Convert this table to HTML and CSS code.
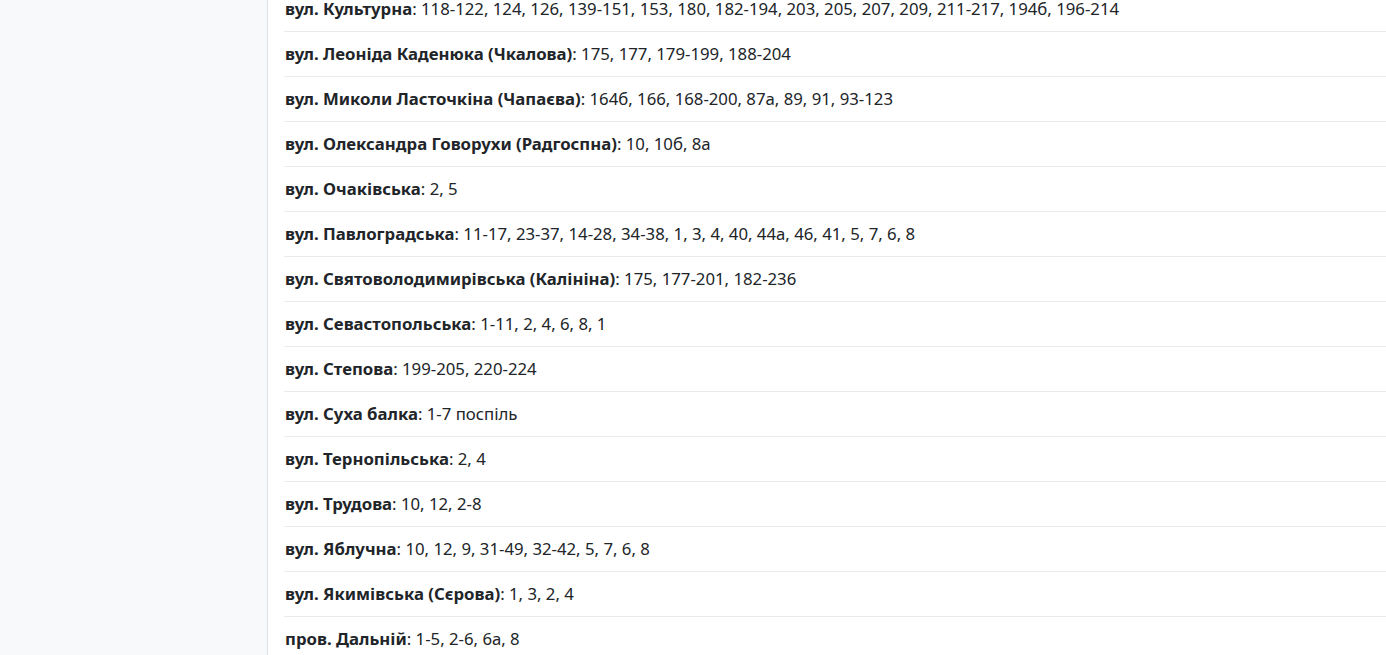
FILE: index.html
```html
<!DOCTYPE html>
<html lang="uk">
<head>
<meta charset="utf-8">
<title>Адреси</title>
<link rel="stylesheet" href="styles.css">
</head>
<body>
<div class="layout">
  <aside class="sidebar"></aside>
  <main class="content">
    <ul class="streets">
      <li class="street"><b>вул. Культурна</b>: 118-122, 124, 126, 139-151, 153, 180, 182-194, 203, 205, 207, 209, 211-217, 194б, 196-214</li>
      <li class="street"><b>вул. Леоніда Каденюка (Чкалова)</b>: 175, 177, 179-199, 188-204</li>
      <li class="street"><b>вул. Миколи Ласточкіна (Чапаєва)</b>: 164б, 166, 168-200, 87а, 89, 91, 93-123</li>
      <li class="street"><b>вул. Олександра Говорухи (Радгоспна)</b>: 10, 10б, 8а</li>
      <li class="street"><b>вул. Очаківська</b>: 2, 5</li>
      <li class="street"><b>вул. Павлоградська</b>: 11-17, 23-37, 14-28, 34-38, 1, 3, 4, 40, 44а, 46, 41, 5, 7, 6, 8</li>
      <li class="street"><b>вул. Святоволодимирівська (Калініна)</b>: 175, 177-201, 182-236</li>
      <li class="street"><b>вул. Севастопольська</b>: 1-11, 2, 4, 6, 8, 1</li>
      <li class="street"><b>вул. Степова</b>: 199-205, 220-224</li>
      <li class="street"><b>вул. Суха балка</b>: 1-7 поспіль</li>
      <li class="street"><b>вул. Тернопільська</b>: 2, 4</li>
      <li class="street"><b>вул. Трудова</b>: 10, 12, 2-8</li>
      <li class="street"><b>вул. Яблучна</b>: 10, 12, 9, 31-49, 32-42, 5, 7, 6, 8</li>
      <li class="street"><b>вул. Якимівська (Сєрова)</b>: 1, 3, 2, 4</li>
      <li class="street"><b>пров. Дальній</b>: 1-5, 2-6, 6а, 8</li>
    </ul>
  </main>
</div>
</body>
</html>
```
FILE: styles.css
```css
html, body {
  margin: 0;
  padding: 0;
  height: 100%;
  overflow: hidden;
  background: #ffffff;
}
body {
  font-family: "Noto Sans", "Open Sans", "Liberation Sans", sans-serif;
  font-size: 16.75px;
  line-height: 24px;
  color: #212529;
}
.layout {
  display: flex;
  height: 100%;
}
.sidebar {
  flex: 0 0 267px;
  background: #f8f9fa;
  border-right: 1px solid #dee2e6;
}
.content {
  flex: 1;
  padding-left: 16px;
  min-width: 0;
}
.streets {
  list-style: none;
  margin: -13px 0 0 0;
  padding: 0;
}
.street {
  padding: 10px 0 10px 1px;
  border-bottom: 1px solid #e9ecef;
  white-space: nowrap;
}
.street b {
  font-weight: 700;
}
```
